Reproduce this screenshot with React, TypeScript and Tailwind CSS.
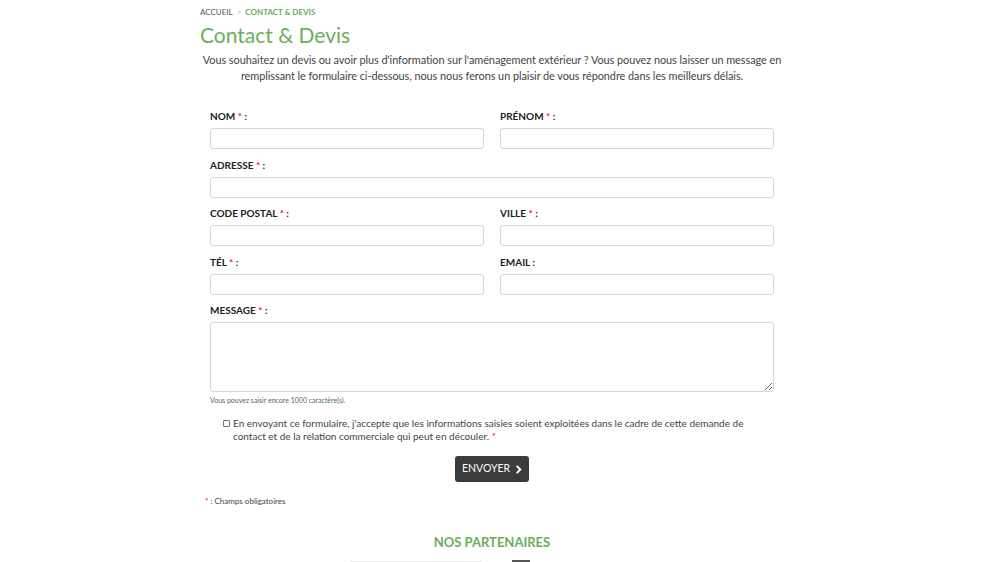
import React from "react"

const Req = () => <span className="text-[#e3262d]">*</span>

const Field = ({ label, required = true, className = "" }: { label: string; required?: boolean; className?: string }) => (
    <div className={className}>
        <label className="block h-[12px] text-[10px] leading-[12px] font-bold uppercase text-[#222]">
            {label} {required && <Req />} :
        </label>
        <input className="mt-[6px] block h-[21px] w-full rounded-[3px] border border-[#d6d6d6] bg-white" />
    </div>
)

export default function App() {
    return (
        <div className="min-h-[562px] overflow-hidden bg-white font-['Lato',sans-serif] text-[#444]">
            <div className="mx-auto w-[600px] pt-[7px] pr-[16px]">
                <div className="flex items-center gap-[4px] text-[8px] leading-[10px] uppercase">
                    <span className="text-[#555]">Accueil</span>
                    <span className="text-[#bbb]">&gt;</span>
                    <span className="font-bold text-[#6aaf5c]">Contact &amp; Devis</span>
                </div>
                <h1 className="mt-[5px] text-[21px] leading-[26px] text-[#6aaf5c]">Contact &amp; Devis</h1>
                <p className="mt-[4px] text-center text-[10.9px] leading-[15.5px] tracking-[-0.05px] text-[#444]">
                    Vous souhaitez un devis ou avoir plus d'information sur l'aménagement extérieur ? Vous pouvez nous laisser un message en remplissant le formulaire ci-dessous, nous nous ferons un plaisir de vous répondre dans les meilleurs délais.
                </p>

                <form className="mx-[10px] mt-[27px]">
                    <div className="grid grid-cols-2 gap-x-[16px] gap-y-[9.5px]">
                        <Field label="Nom" />
                        <Field label="Prénom" />
                        <Field label="Adresse" className="col-span-2" />
                        <Field label="Code postal" />
                        <Field label="Ville" />
                        <Field label="Tél" />
                        <Field label="Email" required={false} />
                        <div className="col-span-2">
                            <label className="block h-[12px] text-[10px] leading-[12px] font-bold uppercase text-[#222]">
                                Message <Req /> :
                            </label>
                            <textarea className="mt-[6px] block h-[70px] w-full rounded-[3px] border border-[#d6d6d6] bg-white" />
                            <div className="mt-[4px] text-[7px] leading-[9px] text-[#4f6b6b]">
                                Vous pouvez saisir encore 1000 caractère(s).
                            </div>
                        </div>
                    </div>

                    <div className="mt-[12px] flex pl-[13px]">
                        <span className="mt-[3px] mr-[3px] block h-[7px] w-[7px] shrink-0 rounded-[1px] border border-[#777]" />
                        <p className="w-[515px] text-[10px] leading-[13px] text-[#444]">
                            En envoyant ce formulaire, j'accepte que les informations saisies soient exploitées dans le cadre de cette demande de contact et de la relation commerciale qui peut en découler.&nbsp;<Req />
                        </p>
                    </div>

                    <div className="mt-[13px] flex justify-center">
                        <button
                            type="button"
                            className="flex h-[26px] w-[74px] items-center justify-center gap-[5px] rounded-[3px] bg-[#3b3b3b] text-[10.5px] text-white uppercase"
                        >
                            Envoyer
                            <svg width="7" height="9" viewBox="0 0 7 10" fill="none" stroke="white" strokeWidth="2.2">
                                <path d="M1.5 1 L5.5 5 L1.5 9" />
                            </svg>
                        </button>
                    </div>
                </form>

                <div className="mt-[14px] ml-[5px] text-[8px] leading-[10px] text-[#444]">
                    <Req /> : Champs obligatoires
                </div>

                <h2 className="mt-[28px] text-center text-[13px] leading-[16px] font-bold text-[#6aaf5c] uppercase">
                    Nos partenaires
                </h2>
                <div className="mt-[10px] ml-[150px] flex items-start gap-[30px]">
                    <div className="mt-[1px] h-px w-[132px] bg-[#eee]" />
                    <div className="h-[4px] w-[18px] bg-[#555]" />
                </div>
            </div>
        </div>
    )
}
